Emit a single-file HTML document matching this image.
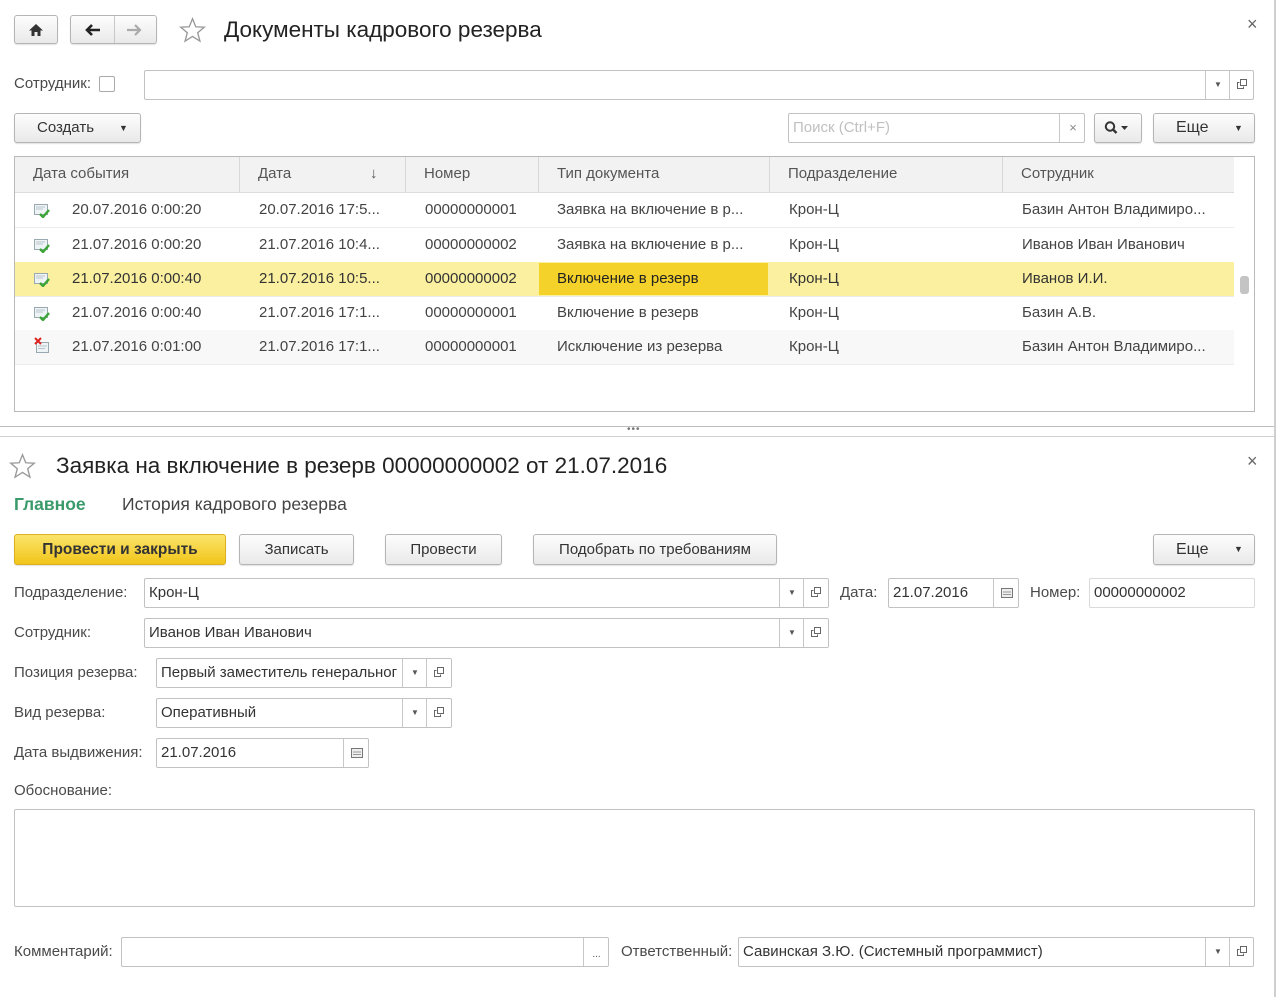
<!DOCTYPE html>
<html><head><meta charset="utf-8"><style>
body{margin:0;width:1280px;height:997px;background:#fff;position:relative;overflow:hidden;font-family:"Liberation Sans","DejaVu Sans",sans-serif;color:#444}
.a{position:absolute;white-space:nowrap}
.t{position:absolute;white-space:nowrap;font-size:15px;color:#4a4a4a}
.btn{position:absolute;box-sizing:border-box;border:1px solid #b5b5b5;border-radius:3px;background:linear-gradient(#fdfdfd,#e9e9e9);box-shadow:0 1px 1px rgba(0,0,0,.12);text-align:center;font-size:15px;color:#333}
.inp{position:absolute;box-sizing:border-box;border:1px solid #c2c2c2;border-radius:2px;background:#fff;font-size:15px;color:#333;padding-left:4px;overflow:hidden}
.seg{position:absolute;top:0;bottom:0;border-left:1px solid #c8c8c8;text-align:center;font-size:8px;color:#555}
.row{position:absolute;left:15px;width:1219px;height:34px;border-bottom:1px solid #ececec}
.cell{position:absolute;top:0;line-height:34px;font-size:15px;color:#444;white-space:nowrap}
.hd{position:absolute;top:0;line-height:34px;font-size:15px;color:#555;border-left:1px solid #d8d8d8;height:35px;padding-left:18px;box-sizing:border-box}
</style></head><body>
<svg width="0" height="0" style="position:absolute"><defs>
<g id="op"><rect x="3.5" y="0.5" width="6" height="6" fill="#fff" stroke="#666"/><path d="M2.5 3.5 H0.5 V9.5 H6.5 V7.5" fill="none" stroke="#666"/></g>
<g id="ok"><rect x="0.5" y="1.5" width="13" height="10" fill="#eef3f6" stroke="#9aa8b0"/><path d="M2 4H11M2 6H9" stroke="#b8c4cc"/><path d="M6 11 L9 14 L15 7" fill="none" stroke="#3aa536" stroke-width="2.4"/></g>
</defs></svg>

<div class="a" style="left:1274px;top:0;width:2px;height:997px;background:#cfcfcf"></div>

<div class="btn" style="left:14px;top:15px;width:44px;height:29px"><svg width="16" height="14" style="margin-top:7px" viewBox="0 0 16 14"><path d="M8 1 L15 7.5 H12.5 V13 H9.5 V9 H6.5 V13 H3.5 V7.5 H1 Z" fill="#333"/></svg></div>
<div class="btn" style="left:70px;top:15px;width:87px;height:29px"><div class="a" style="left:43px;top:0;bottom:0;border-left:1px solid #c8c8c8"></div>
<svg class="a" style="left:12px;top:7px" width="20" height="14" viewBox="0 0 20 14"><path d="M17 7H4M9 2L4 7L9 12" fill="none" stroke="#222" stroke-width="2.6"/></svg>
<svg class="a" style="left:53px;top:7px" width="20" height="14" viewBox="0 0 20 14"><path d="M3 7H16M11 2L16 7L11 12" fill="none" stroke="#aaa" stroke-width="2.2"/></svg></div>
<svg class="a" style="left:179px;top:17px" width="27" height="26" viewBox="0 0 24 23"><path d="M12 1.5 L14.9 8.6 L22.5 9 L16.6 13.9 L18.6 21.4 L12 17.2 L5.4 21.4 L7.4 13.9 L1.5 9 L9.1 8.6 Z" fill="none" stroke="#999" stroke-width="1.2"/></svg>
<div class="a" style="left:224px;top:17px;font-size:22.5px;color:#222">Документы кадрового резерва</div>
<div class="a" style="left:1247px;top:14px;font-size:18px;color:#666">×</div>

<div class="t" style="left:14px;top:75px">Сотрудник:</div>
<div class="a" style="left:99px;top:76px;width:16px;height:16px;border:1px solid #aaa;border-radius:2px;box-sizing:border-box"></div>
<div class="inp" style="left:144px;top:70px;width:1110px;height:30px"><div class="seg" style="left:1060px;width:24px;line-height:28px">▼</div><div class="seg" style="left:1084px;width:24px"><svg width="11" height="11" style="margin-top:8px"><use href="#op"/></svg></div></div>

<div class="btn" style="left:14px;top:113px;width:127px;height:30px;line-height:28px;text-align:left;padding-left:22px">Создать<span style="position:absolute;left:104px;font-size:9px">▼</span></div>
<div class="inp" style="left:788px;top:113px;width:297px;height:30px;line-height:28px;color:#c0c0c0">Поиск (Ctrl+F)<div class="seg" style="left:270px;width:26px;font-size:13px;color:#888;line-height:27px">×</div></div>
<div class="btn" style="left:1094px;top:113px;width:48px;height:30px"><svg width="28" height="14" style="margin-top:7px" viewBox="0 0 28 14"><circle cx="6" cy="5.5" r="4.2" fill="none" stroke="#333" stroke-width="2"/><path d="M9 8.5L12.5 12" stroke="#333" stroke-width="2.4"/><path d="M17 5H24L20.5 9Z" fill="#333"/></svg></div>
<div class="btn" style="left:1153px;top:113px;width:102px;height:30px;line-height:28px;text-align:left;padding-left:22px;font-size:16px">Еще<span style="position:absolute;left:80px;font-size:9px">▼</span></div>

<div class="a" style="left:14px;top:156px;width:1241px;height:256px;border:1px solid #b9b9b9;box-sizing:border-box"></div>
<div class="a" style="left:15px;top:157px;width:1219px;height:35px;background:#f2f2f2;border-bottom:1px solid #dcdcdc">
<div class="hd" style="left:0;border:none">Дата события</div>
<div class="hd" style="left:224px;width:166px">Дата<span style="position:absolute;left:130px">↓</span></div>
<div class="hd" style="left:390px">Номер</div>
<div class="hd" style="left:523px">Тип документа</div>
<div class="hd" style="left:754px">Подразделение</div>
<div class="hd" style="left:987px">Сотрудник</div>
</div>
<div class="a" style="left:1240px;top:276px;width:9px;height:18px;background:#c4c4c4;border-radius:3px"></div>

<div class="row" style="top:193px">
<svg class="a" style="left:19px;top:10px" width="16" height="15"><use href="#ok"/></svg>
<div class="cell" style="left:57px">20.07.2016 0:00:20</div><div class="cell" style="left:244px">20.07.2016 17:5...</div><div class="cell" style="left:410px">00000000001</div><div class="cell" style="left:542px">Заявка на включение в р...</div><div class="cell" style="left:774px">Крон-Ц</div><div class="cell" style="left:1007px">Базин Антон Владимиро...</div></div>
<div class="row" style="top:228px">
<svg class="a" style="left:19px;top:10px" width="16" height="15"><use href="#ok"/></svg>
<div class="cell" style="left:57px">21.07.2016 0:00:20</div><div class="cell" style="left:244px">21.07.2016 10:4...</div><div class="cell" style="left:410px">00000000002</div><div class="cell" style="left:542px">Заявка на включение в р...</div><div class="cell" style="left:774px">Крон-Ц</div><div class="cell" style="left:1007px">Иванов Иван Иванович</div></div>
<div class="row" style="top:262px;background:#faf0a0">
<div class="a" style="left:524px;top:1px;width:229px;height:32px;background:#f4d22a"></div>
<svg class="a" style="left:19px;top:10px" width="16" height="15"><use href="#ok"/></svg>
<div class="cell" style="left:57px;color:#333">21.07.2016 0:00:40</div><div class="cell" style="left:244px;color:#333">21.07.2016 10:5...</div><div class="cell" style="left:410px;color:#333">00000000002</div><div class="cell" style="left:542px;color:#222">Включение в резерв</div><div class="cell" style="left:774px;color:#333">Крон-Ц</div><div class="cell" style="left:1007px;color:#333">Иванов И.И.</div></div>
<div class="row" style="top:296px">
<svg class="a" style="left:19px;top:10px" width="16" height="15"><use href="#ok"/></svg>
<div class="cell" style="left:57px">21.07.2016 0:00:40</div><div class="cell" style="left:244px">21.07.2016 17:1...</div><div class="cell" style="left:410px">00000000001</div><div class="cell" style="left:542px">Включение в резерв</div><div class="cell" style="left:774px">Крон-Ц</div><div class="cell" style="left:1007px">Базин А.В.</div></div>
<div class="row" style="top:330px;background:#f8f8f8">
<svg class="a" style="left:19px;top:7px" width="16" height="17" viewBox="0 0 16 17"><rect x="2.5" y="5.5" width="12" height="10" fill="#eef3f6" stroke="#9aa8b0"/><path d="M4 9H13M4 11.5H11" stroke="#b8c4cc"/><path d="M1 1L7 7M7 1L1 7" stroke="#d22" stroke-width="2"/></svg>
<div class="cell" style="left:57px">21.07.2016 0:01:00</div><div class="cell" style="left:244px">21.07.2016 17:1...</div><div class="cell" style="left:410px">00000000001</div><div class="cell" style="left:542px">Исключение из резерва</div><div class="cell" style="left:774px">Крон-Ц</div><div class="cell" style="left:1007px">Базин Антон Владимиро...</div></div>

<div class="a" style="left:0;top:426px;width:1274px;height:1px;background:#bdbdbd"></div>
<div class="a" style="left:0;top:436px;width:1274px;height:1px;background:#d0d0d0"></div>
<div class="a" style="left:627px;top:424px;font-size:10px;color:#777;letter-spacing:1px">•••</div>

<svg class="a" style="left:9px;top:453px" width="27" height="26" viewBox="0 0 24 23"><path d="M12 1.5 L14.9 8.6 L22.5 9 L16.6 13.9 L18.6 21.4 L12 17.2 L5.4 21.4 L7.4 13.9 L1.5 9 L9.1 8.6 Z" fill="none" stroke="#999" stroke-width="1.2"/></svg>
<div class="a" style="left:56px;top:453px;font-size:22.5px;color:#222">Заявка на включение в резерв 00000000002 от 21.07.2016</div>
<div class="a" style="left:1247px;top:451px;font-size:18px;color:#666">×</div>
<div class="a" style="left:14px;top:494px;font-size:17.5px;font-weight:bold;color:#3a9a6a">Главное</div>
<div class="a" style="left:122px;top:494px;font-size:17.5px;color:#444">История кадрового резерва</div>

<div class="btn" style="left:14px;top:534px;width:212px;height:31px;line-height:29px;background:linear-gradient(#fbe46a,#f1c51a);border-color:#dcb020;color:#333;font-weight:bold;font-size:15.5px">Провести и закрыть</div>
<div class="btn" style="left:239px;top:534px;width:115px;height:31px;line-height:29px">Записать</div>
<div class="btn" style="left:385px;top:534px;width:117px;height:31px;line-height:29px">Провести</div>
<div class="btn" style="left:533px;top:534px;width:244px;height:31px;line-height:29px">Подобрать по требованиям</div>
<div class="btn" style="left:1153px;top:534px;width:102px;height:31px;line-height:29px;text-align:left;padding-left:22px;font-size:16px">Еще<span style="position:absolute;left:80px;font-size:9px">▼</span></div>

<div class="t" style="left:14px;top:584px">Подразделение:</div>
<div class="inp" style="left:144px;top:578px;width:685px;height:30px;line-height:28px">Крон-Ц<div class="seg" style="left:634px;width:24px;line-height:28px">▼</div><div class="seg" style="left:658px;width:25px"><svg width="11" height="11" style="margin-top:8px"><use href="#op"/></svg></div></div>
<div class="t" style="left:840px;top:584px">Дата:</div>
<div class="inp" style="left:888px;top:578px;width:131px;height:30px;line-height:28px">21.07.2016<div class="seg" style="left:104px;width:25px"><svg width="12" height="10" style="margin-top:9px"><rect x=".5" y=".5" width="11" height="9" fill="#eee" stroke="#777"/><path d="M2 4H10M2 6.5H10" stroke="#999"/></svg></div></div>
<div class="t" style="left:1030px;top:584px">Номер:</div>
<div class="inp" style="left:1089px;top:578px;width:166px;height:30px;line-height:28px;border-color:#dadada">00000000002</div>

<div class="t" style="left:14px;top:624px">Сотрудник:</div>
<div class="inp" style="left:144px;top:618px;width:685px;height:30px;line-height:28px">Иванов Иван Иванович<div class="seg" style="left:634px;width:24px;line-height:28px">▼</div><div class="seg" style="left:658px;width:25px"><svg width="11" height="11" style="margin-top:8px"><use href="#op"/></svg></div></div>

<div class="t" style="left:14px;top:664px">Позиция резерва:</div>
<div class="inp" style="left:156px;top:658px;width:296px;height:30px;line-height:28px">Первый заместитель генеральног<div class="seg" style="left:245px;width:24px;line-height:28px;background:#fff">▼</div><div class="seg" style="left:269px;width:25px;background:#fff"><svg width="11" height="11" style="margin-top:8px"><use href="#op"/></svg></div></div>
<div class="t" style="left:14px;top:704px">Вид резерва:</div>
<div class="inp" style="left:156px;top:698px;width:296px;height:30px;line-height:28px">Оперативный<div class="seg" style="left:245px;width:24px;line-height:28px">▼</div><div class="seg" style="left:269px;width:25px"><svg width="11" height="11" style="margin-top:8px"><use href="#op"/></svg></div></div>
<div class="t" style="left:14px;top:744px">Дата выдвижения:</div>
<div class="inp" style="left:156px;top:738px;width:213px;height:30px;line-height:28px">21.07.2016<div class="seg" style="left:186px;width:25px"><svg width="12" height="10" style="margin-top:9px"><rect x=".5" y=".5" width="11" height="9" fill="#eee" stroke="#777"/><path d="M2 4H10M2 6.5H10" stroke="#999"/></svg></div></div>
<div class="t" style="left:14px;top:782px">Обоснование:</div>
<div class="inp" style="left:14px;top:809px;width:1241px;height:98px"></div>

<div class="t" style="left:14px;top:943px">Комментарий:</div>
<div class="inp" style="left:121px;top:937px;width:488px;height:30px"><div class="seg" style="left:461px;width:25px;line-height:34px;font-size:10px">...</div></div>
<div class="t" style="left:621px;top:943px">Ответственный:</div>
<div class="inp" style="left:738px;top:937px;width:516px;height:30px;line-height:28px">Савинская З.Ю. (Системный программист)<div class="seg" style="left:466px;width:24px;line-height:28px">▼</div><div class="seg" style="left:490px;width:24px"><svg width="11" height="11" style="margin-top:8px"><use href="#op"/></svg></div></div>
</body></html>
